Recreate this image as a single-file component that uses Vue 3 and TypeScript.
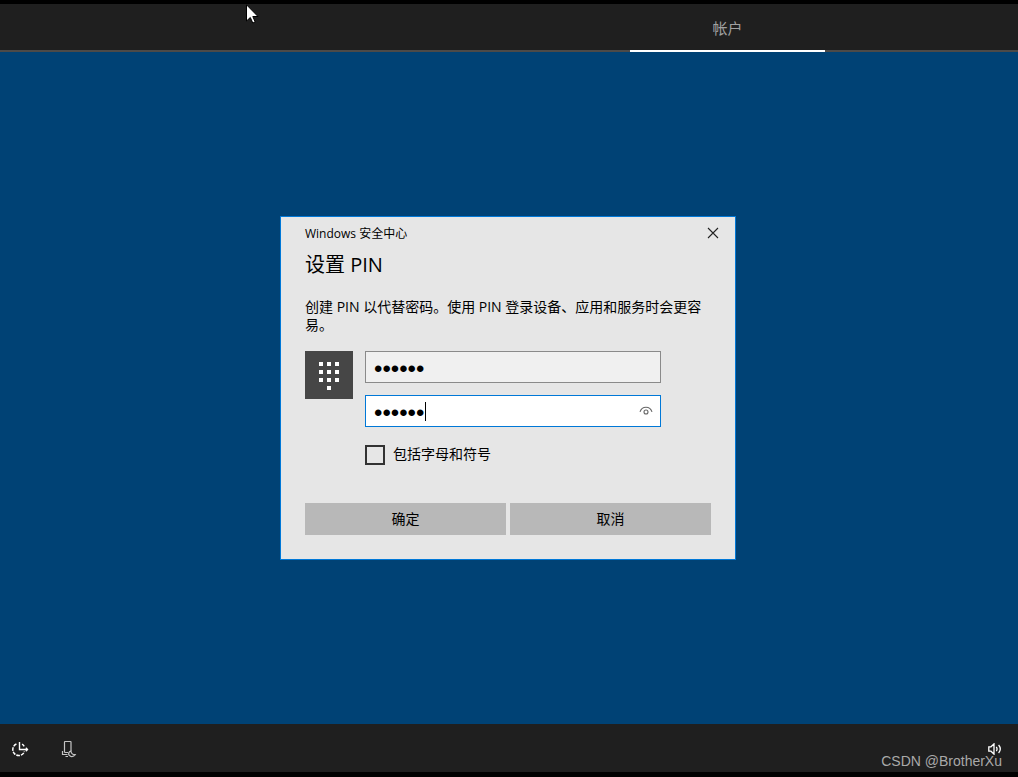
<script setup lang="ts">
import { ref } from 'vue'

const pin = ref<string>('482615')
const confirmPin = ref<string>('482615')
const includeSymbols = ref<boolean>(false)
const keypad: [number, number][] = [
  [14, 11], [22, 11], [30, 11],
  [14, 19], [22, 19], [30, 19],
  [14, 27], [22, 27], [30, 27],
  [22, 35],
]
</script>

<template>
  <div class="screen">
    <header class="topbar">
      <nav class="tabs">
        <a class="tab" href="#account">帐户</a>
      </nav>
    </header>

    <main class="stage">
      <form class="dialog" role="dialog" aria-labelledby="dialog-title" @submit.prevent>
        <div class="caption">
          <span>Windows 安全中心</span>
          <button class="close" type="button" aria-label="关闭">
            <svg width="12" height="12" viewBox="0 0 12 12">
              <path d="M1 1L11 11M11 1L1 11" stroke="#222" stroke-width="1.1" fill="none" />
            </svg>
          </button>
        </div>
        <h1 id="dialog-title" class="title">设置 PIN</h1>
        <p class="description">创建 PIN 以代替密码。使用 PIN 登录设备、应用和服务时会更容易。</p>

        <div class="body">
          <svg class="keypad" width="48" height="48" viewBox="0 0 48 48" aria-hidden="true">
            <rect width="48" height="48" fill="#464646" />
            <rect v-for="([x, y], i) in keypad" :key="i" :x="x" :y="y" width="4" height="4" fill="#fff" />
          </svg>
          <div class="fields">
            <div class="field">
              <input v-model="pin" type="password" aria-label="新的 PIN" />
            </div>
            <div class="field active">
              <input v-model="confirmPin" type="password" aria-label="确认 PIN" />
              <span class="caret"></span>
              <button class="reveal" type="button" aria-label="显示 PIN">
                <svg width="14" height="10" viewBox="0 0 14 10" fill="none" stroke="#666">
                  <path d="M1 5.8C2 2.8 4.2 1.2 7 1.2S12 2.8 13 5.8" stroke-width="1.1" />
                  <circle cx="7" cy="6" r="2" stroke-width="1.1" />
                </svg>
              </button>
            </div>
            <label class="option">
              <input v-model="includeSymbols" type="checkbox" />
              <span>包括字母和符号</span>
            </label>
          </div>
        </div>

        <div class="actions">
          <button type="submit">确定</button>
          <button type="button">取消</button>
        </div>
      </form>
    </main>

    <footer class="bottombar">
      <div class="tools">
        <button type="button" aria-label="轻松使用">
          <svg width="20" height="18" viewBox="0 0 20 18" fill="none" stroke="#fff">
            <path d="M6.4 4A6 6 0 1 0 14.4 11.6" stroke-width="1.5" stroke-dasharray="3.6 1" />
            <path d="M9.5 2V9.5H17.5" stroke-width="1.4" />
            <path d="M12 4.2Q13.4 4.8 14.2 6.4" stroke-width="1.4" />
            <path d="M15.8 7.8L17.6 9.5L15.8 11.2" stroke-width="1.2" />
          </svg>
        </button>
        <button type="button" aria-label="语音">
          <svg width="20" height="18" viewBox="0 0 20 18" fill="none" stroke="#c4c4c4" stroke-width="1.2">
            <path d="M5.5 12.5V2Q5.5 1.5 6 1.5H11.5Q12 1.5 12 2V11" />
            <path d="M5.5 12.5H9M3.5 11V14.5H8.5M6.5 16.5H9" />
            <path d="M12 11.2Q12.4 14.6 16.2 14.7Q14.6 17 11.8 16.4Q9 15.4 9.8 12.8Q10.5 11.4 12 11.2Z" />
          </svg>
        </button>
      </div>
      <button class="volume" type="button" aria-label="音量">
        <svg width="14" height="12" viewBox="0 0 14 12" fill="none" stroke="#fff" stroke-width="1.3">
          <path d="M.8 3.8H3L6 .9V11.1L3 8.2H.8Z" />
          <path d="M8.3 3.8Q9.8 6 8.3 8.2M10.6 2Q14 6 10.6 10" />
        </svg>
      </button>
      <span class="watermark">CSDN @BrotherXu</span>
    </footer>

    <svg class="pointer" width="14" height="22" viewBox="0 0 14 22" aria-hidden="true">
      <path d="M.5 .8V17L4.3 13.5L6.8 19L9.2 18L6.8 12.5H12Z" fill="#fff" stroke="#000" stroke-width="1" />
    </svg>
  </div>
</template>

<style>
body {
  margin: 0;
}
</style>

<style scoped>
.screen {
  position: relative;
  box-sizing: border-box;
  min-height: 100vh;
  display: flex;
  flex-direction: column;
  border-top: 4px solid #000;
  border-bottom: 5px solid #000;
  background: #004275;
  color: #000;
  font-family: "Open Sans", "Noto Sans CJK SC", sans-serif;
  font-size: 14px;
}

button {
  padding: 0;
  border: 0;
  background: none;
  color: inherit;
  font: inherit;
}

svg {
  display: block;
}

.topbar {
  background: #1f1f1f;
  box-shadow: inset 0 -2px #4c4a48;
}

.tabs {
  display: flex;
  justify-content: flex-end;
  padding-right: 193px;
}

.tab {
  box-sizing: border-box;
  width: 195px;
  height: 48px;
  border-bottom: 2px solid #fff;
  color: #a0a0a0;
  font-size: 15px;
  line-height: 48px;
  text-align: center;
  text-decoration: none;
}

.stage {
  flex: 1;
  display: flex;
  align-items: center;
  justify-content: center;
  padding-right: 2px;
}

.dialog {
  box-sizing: border-box;
  width: 456px;
  padding: 0 24px 24px;
  border: 1px solid #0078d7;
  background: #e6e6e6;
}

.caption {
  display: flex;
  align-items: center;
  justify-content: space-between;
  height: 32px;
  font-size: 12px;
}

.close {
  display: grid;
  place-items: center;
  width: 32px;
  height: 32px;
  margin-right: -18px;
}

.title {
  margin: 0;
  font-size: 20px;
  font-weight: 400;
  line-height: 32px;
}

.description {
  margin: 17px 0;
  line-height: 18px;
}

.body {
  display: flex;
  gap: 12px;
}

.keypad {
  flex: none;
}

.fields {
  flex: 1;
  min-width: 0;
  display: flex;
  flex-direction: column;
  gap: 12px;
  padding-right: 50px;
}

.field {
  position: relative;
  box-sizing: border-box;
  display: flex;
  align-items: center;
  height: 32px;
  border: 1px solid #8a8a8a;
  background: #f0f0f0;
}

.field.active {
  border-color: #0078d7;
  background: #fff;
}

.field input {
  flex: 1;
  min-width: 0;
  height: 30px;
  box-sizing: border-box;
  padding: 4px 8px 0;
  border: 0;
  outline: 0;
  background: none;
  color: #000;
  font-family: "Liberation Sans", sans-serif;
  font-size: 24px;
}

.caret {
  position: absolute;
  left: 59px;
  top: 6px;
  width: 1px;
  height: 19px;
  background: #000;
}

.reveal {
  margin-right: 7px;
}

.option {
  display: flex;
  align-items: center;
  gap: 8px;
  margin-top: 6px;
  height: 20px;
  line-height: 16px;
}

.option span {
  padding-bottom: 2px;
}

.option input {
  appearance: none;
  box-sizing: border-box;
  width: 20px;
  height: 20px;
  margin: 0;
  border: 2px solid #333;
}

.actions {
  display: grid;
  grid-template-columns: 1fr 1fr;
  gap: 4px;
  margin-top: 38px;
}

.actions button {
  height: 32px;
  padding-bottom: 2px;
  background: #b8b8b8;
}

.bottombar {
  position: relative;
  box-sizing: border-box;
  display: flex;
  align-items: center;
  justify-content: space-between;
  height: 48px;
  padding: 2px 16px 0 10px;
  background: #1f1f1f;
}

.tools {
  display: flex;
  gap: 29px;
}

.watermark {
  position: absolute;
  right: 16px;
  bottom: 2px;
  color: #a9a9a9;
  font-family: "Liberation Sans", sans-serif;
  font-size: 14px;
  line-height: 18px;
}

.pointer {
  position: absolute;
  left: 246px;
  top: 0;
}
</style>
